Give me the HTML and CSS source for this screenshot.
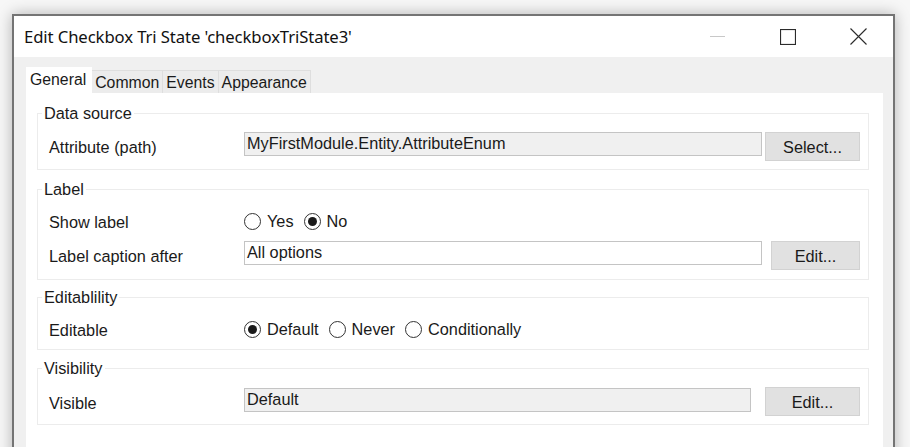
FILE: index.html
```html
<!DOCTYPE html>
<html>
<head>
<meta charset="utf-8">
<link rel="stylesheet" href="styles.css">
</head>
<body>
<div class="window">
  <div class="titlebar">
    <div class="title">Edit Checkbox Tri State 'checkboxTriState3'</div>
    <div class="controls">
      <div class="ctl"><svg width="16" height="16" viewBox="0 0 16 16"><path d="M0 7.5H15" stroke="#c8c8c8" stroke-width="1" fill="none"/></svg></div>
      <div class="ctl"><svg width="16" height="16" viewBox="0 0 16 16"><rect x="0.5" y="0.5" width="15" height="15" stroke="#2b2b2b" stroke-width="1.2" fill="none"/></svg></div>
      <div class="ctl"><svg width="17" height="17" viewBox="0 0 17 17"><path d="M0.5 0.5L16.5 16.5M16.5 0.5L0.5 16.5" stroke="#2b2b2b" stroke-width="1.1" fill="none"/></svg></div>
    </div>
  </div>
  <div class="client">
    <div class="tabs">
      <div class="tab active">General</div>
      <div class="tab">Common</div>
      <div class="tab">Events</div>
      <div class="tab">Appearance</div>
    </div>
    <div class="panel">
      <fieldset class="group g-data">
        <legend>Data source</legend>
        <div class="row row-field">
          <div class="lbl">Attribute (path)</div>
          <div class="field ro">MyFirstModule.Entity.AttributeEnum</div>
          <div class="btn wide gap-s">Select...</div>
        </div>
      </fieldset>
      <fieldset class="group g-label">
        <legend>Label</legend>
        <div class="row row-radio">
          <div class="lbl">Show label</div>
          <div class="radios">
            <span class="radio"></span><span class="rtext">Yes</span>
            <span class="radio on"></span><span class="rtext">No</span>
          </div>
        </div>
        <div class="row row-field second">
          <div class="lbl">Label caption after</div>
          <div class="field">All options</div>
          <div class="btn narrow gap-m">Edit...</div>
        </div>
      </fieldset>
      <fieldset class="group g-edit">
        <legend>Editablility</legend>
        <div class="row row-radio">
          <div class="lbl">Editable</div>
          <div class="radios">
            <span class="radio on"></span><span class="rtext">Default</span>
            <span class="radio"></span><span class="rtext">Never</span>
            <span class="radio"></span><span class="rtext">Conditionally</span>
          </div>
        </div>
      </fieldset>
      <fieldset class="group g-vis">
        <legend>Visibility</legend>
        <div class="row row-field">
          <div class="lbl">Visible</div>
          <div class="field ro">Default</div>
          <div class="btn wide gap-l">Edit...</div>
        </div>
      </fieldset>
    </div>
  </div>
</div>
</body>
</html>
```

FILE: styles.css
```css
html, body {
  margin: 0;
  padding: 0;
  height: 100%;
  overflow: hidden;
}
body {
  background: #f7f7f7;
  font-family: "Liberation Sans", Arial, sans-serif;
  font-size: 16.3px;
  color: #1a1a1a;
}
.window {
  margin: 14px 0 0 12px;
  width: 879px;
  height: 460px;
  border: 2px solid #747474;
  background: #f0f0f0;
  box-shadow: 0 0 14px rgba(0, 0, 0, 0.28);
  display: flex;
  flex-direction: column;
}
.titlebar {
  height: 41px;
  background: #ffffff;
  display: flex;
  align-items: center;
  flex-shrink: 0;
}
.title {
  flex: 1;
  padding-left: 10px;
  font-family: "Noto Sans", "Open Sans", sans-serif;
  font-size: 16.7px;
  color: #111;
  letter-spacing: -0.1px;
}
.controls {
  display: flex;
  height: 100%;
}
.ctl {
  width: 70px;
  display: flex;
  align-items: center;
  justify-content: center;
}
.client {
  flex: 1;
  padding: 11px 10px 0 12px;
  display: flex;
  flex-direction: column;
}
.tabs {
  display: flex;
  align-items: flex-end;
  height: 25px;
}
.tab {
  height: 22px;
  line-height: 23px;
  padding: 0 3px;
  font-size: 15.8px;
  background: #ececec;
  border: 1px solid #dedede;
  border-bottom: none;
  margin-right: -1px;
}
.tab.active {
  height: 25px;
  line-height: 24px;
  background: #ffffff;
  border-color: #ffffff;
  padding: 0 5px 0 3px;
  position: relative;
  z-index: 1;
}
.panel {
  flex: 1;
  background: #ffffff;
  padding: 11px 14px 0 11px;
}
.group {
  margin: 0;
  padding: 0 8px 8px 11px;
  border: 1px solid #ececec;
  min-width: 0;
}
.group legend {
  margin-left: -7px;
  padding: 0 2px;
  line-height: 18px;
  color: #1a1a1a;
}
.g-label { margin-top: 10px; padding-bottom: 9px; }
.g-edit { margin-top: 8px; padding-bottom: 9px; }
.g-vis { margin-top: 9px; }
.row {
  display: flex;
  align-items: center;
}
.row-field {
  height: 30px;
  margin-top: 9px;
}
.g-vis .row-field { margin-top: 10px; height: 29px; }
.row-radio {
  height: 22px;
  margin-top: 12px;
}
.row.second {
  margin-top: 8px;
  height: 30px;
}
.lbl {
  width: 195px;
  flex-shrink: 0;
  padding-top: 3px;
}
.field {
  flex: 1;
  height: 24px;
  box-sizing: border-box;
  border: 1px solid #c4c4c4;
  background: #ffffff;
  padding: 0 2px;
  line-height: 21px;
  align-self: flex-start;
  margin-top: 1px;
}
.field.ro {
  background: #f0f0f0;
}
.btn {
  height: 29px;
  box-sizing: border-box;
  background: #e1e1e1;
  border: 1px solid #d2d2d2;
  display: flex;
  align-items: center;
  justify-content: center;
  align-self: flex-end;
  padding-top: 1px;
}
.btn.wide { width: 95px; }
.btn.narrow { width: 89px; }
.gap-s { margin-left: 3px; }
.gap-m { margin-left: 9px; }
.gap-l { margin-left: 14px; }
.radios {
  display: flex;
  align-items: center;
}
.radio {
  width: 17px;
  height: 17px;
  box-sizing: border-box;
  border: 1px solid #333;
  border-radius: 50%;
  position: relative;
  flex-shrink: 0;
}
.radio.on::after {
  content: "";
  position: absolute;
  left: 3px;
  top: 3px;
  width: 9px;
  height: 9px;
  border-radius: 50%;
  background: #1a1a1a;
}
.rtext {
  margin-left: 6px;
  margin-right: 10px;
}
```
